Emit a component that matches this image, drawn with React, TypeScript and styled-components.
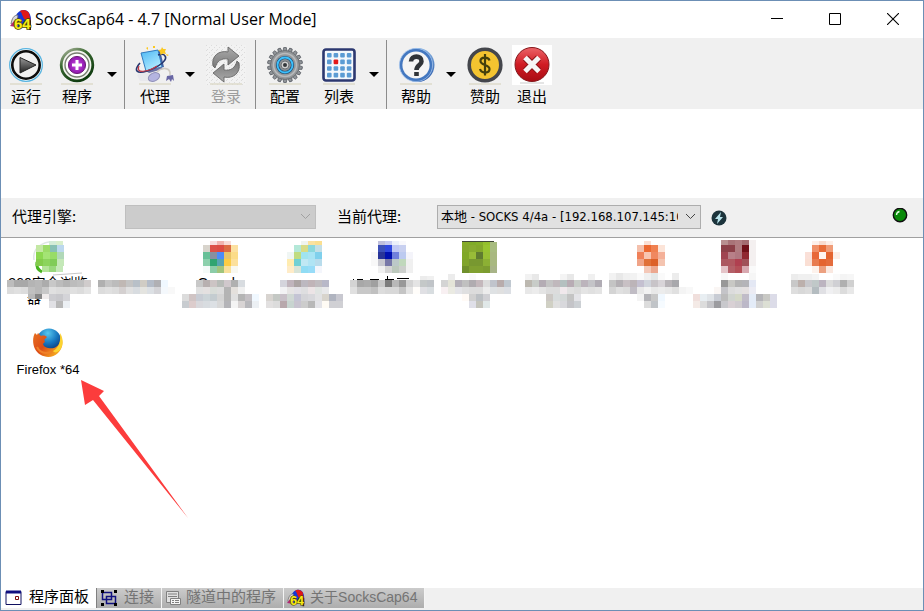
import React from "react";
import styled, { createGlobalStyle } from "styled-components";

const CJK = '"Noto Sans CJK SC", sans-serif';

const GlobalStyle = createGlobalStyle`
  * { box-sizing: border-box; }
  html, body, #root { height: 100%; }
  body {
    margin: 0;
    background: #fff;
    color: #000;
    font-family: "Liberation Sans", ${CJK};
    font-size: 15px;
  }
  button, select { font: inherit; color: inherit; }
`;

const Window = styled.div`
  display: flex;
  flex-direction: column;
  min-height: 100%;
  border: 1px solid #6c8fb5;
  background: #fff;
`;

const TitleBar = styled.header`
  display: flex;
  align-items: center;
  height: 37px;
  padding-left: 9px;
`;

const Title = styled.h1`
  flex: 1;
  margin: 0 0 2px 3px;
  font: 400 16px/20px "Open Sans", "Noto Sans", sans-serif;
  white-space: nowrap;
`;

const CaptionButton = styled.button`
  display: grid;
  place-items: center;
  width: 58px;
  height: 37px;
  padding: 0 2px 2px 0;
  border: 0;
  background: none;
`;

const Toolbar = styled.div`
  display: flex;
  height: 71px;
  padding-left: 5px;
  background: #f0f0f0;
`;

const ToolGroup = styled.div<{ $trail?: number }>`
  display: flex;
  height: 69px;
  margin-top: 2px;
  padding-right: ${(p) => p.$trail ?? 0}px;
  & + & {
    padding-left: 9px;
    border-left: 1px solid #8c8c8c;
  }
`;

const ToolButton = styled.button<{ $lead?: number }>`
  display: flex;
  flex-direction: column;
  align-items: center;
  width: 40px;
  margin-left: ${(p) => p.$lead ?? 0}px;
  padding: 5px 0 0;
  border: 0;
  background: none;
  font: 400 15px/22px ${CJK};
  white-space: nowrap;
  &:disabled { color: #9d9d9d; }
  svg { display: block; flex: none; }
`;

const MenuArrow = styled.button`
  display: grid;
  place-items: center;
  width: 24px;
  margin-left: 3px;
  padding: 0;
  border: 0;
  background: none;
`;

const Banner = styled.div`
  height: 89px;
  background: #fff;
`;

const ProxyBar = styled.div`
  display: flex;
  align-items: center;
  height: 39px;
  padding: 0 15px 2px 11px;
  background: #f0f0f0;
`;

const FieldLabel = styled.label<{ $width: number }>`
  width: ${(p) => p.$width}px;
  margin-bottom: 2px;
  font: 400 15px/20px ${CJK};
  white-space: nowrap;
`;

const SelectBox = styled.div<{ $width: number }>`
  display: grid;
  width: ${(p) => p.$width}px;
  align-items: center;
  margin-right: 21px;
  & > * { grid-area: 1 / 1; }
  & > svg { justify-self: end; margin-right: 5px; pointer-events: none; }
`;

const Select = styled.select`
  appearance: none;
  width: 100%;
  height: 24px;
  padding: 0 22px 0 3px;
  border: 1px solid #adadad;
  border-radius: 0;
  background: #e1e1e1;
  font: 400 13px/20px "DejaVu Sans Condensed", "Noto Sans", ${CJK};
  &:disabled { background: #ccc; border-color: #bfbfbf; opacity: 1; }
`;

const BoltButton = styled.button`
  display: grid;
  margin: 2px auto 0 -11px;
  padding: 0;
  border: 0;
  background: none;
`;

const ProgramList = styled.main`
  position: relative;
  flex: 1;
  display: grid;
  grid-template-columns: repeat(auto-fill, 86px);
  grid-auto-rows: 86px;
  align-content: start;
  padding-left: 4px;
  border-top: 1px solid #a0a0a0;
`;

const ProgramItem = styled.button`
  position: relative;
  display: flex;
  flex-direction: column;
  align-items: center;
  gap: 3px;
  padding: 3px 0 0;
  border: 0;
  background: none;
  text-align: center;
`;

const IconSlot = styled.span`
  display: block;
  width: 32px;
  height: 32px;
`;

const ProgramLabel = styled.span<{ $large?: boolean }>`
  font: 400 ${(p) => (p.$large ? 14 : 13)}px/15px "Liberation Sans", ${CJK};
  white-space: pre;
`;

const MosaicOverlay = styled.svg`
  position: absolute;
  left: 0;
  top: 0;
  overflow: visible;
`;

const Pointer = styled.svg`
  position: absolute;
  left: 79px;
  top: 141px;
  pointer-events: none;
`;

const TabBar = styled.nav`
  display: flex;
  height: 23px;
  padding-bottom: 2px;
  background: #f0f0f0;
  border-top: 1px solid #fff;
`;

const Tab = styled.button<{ $active?: boolean; $tight?: boolean; $small?: boolean }>`
  display: flex;
  align-items: center;
  gap: ${(p) => (p.$tight ? 5 : 7)}px;
  padding: 0 7px 2px ${(p) => (p.$tight ? 3 : 4)}px;
  border: 0;
  border-right: 1px solid ${(p) => (p.$active ? "#808080" : "#f4f4f4")};
  background: ${(p) => (p.$active ? "#fff" : "linear-gradient(#cbcbcb, #adadad)")};
  color: ${(p) => (p.$active ? "#000" : "#747474")};
  font: 400 ${(p) => (p.$small ? 14 : 15)}px/18px "Liberation Sans", ${CJK};
  white-space: nowrap;
  svg { flex: none; margin-top: 2px; }
`;

const Logo = ({ size }: { size: number }) => (
  <svg width={size} height={size} viewBox="0 0 22 22" aria-hidden="true">
    <path d="M5 10C6 4 10 1 14 1c4 0 7 4 7 10v7H8z" fill="#1438d8" />
    <path d="M10 2c3-2 7-1 9 2l2 9-7-3z" fill="#e01818" />
    <path d="M7 5l4-2 3 8H8z" fill="#1438d8" />
    <path d="M1 15c1-6 3-9 7-9l-1 9z" fill="#d8d8e4" stroke="#666" strokeWidth=".8" />
    <path d="M0 17l4-5 3 1-1 5z" fill="#b02878" />
    <path d="M19 12l2-1v10h-2z" fill="#2c2410" />
    <text x="4" y="20" fontFamily="Liberation Sans" fontWeight="700" fontSize="15" fill="#f8ec18" stroke="#4c4400" strokeWidth="1.5" paintOrder="stroke">64</text>
  </svg>
);

const Shine = () => <path d="M4 39h32" stroke="#dcd8c8" strokeWidth="1.4" />;

const RunIcon = () => (
  <svg width="40" height="40" viewBox="0 0 40 40" aria-hidden="true">
    <defs><linearGradient id="run" x2="0" y2="1"><stop stopColor="#999" /><stop offset="1" stopColor="#222" /></linearGradient></defs>
    <Shine />
    <circle cx="20" cy="20" r="16.3" fill="#fff" stroke="#58b4e0" strokeWidth="1.3" />
    <circle cx="20" cy="20" r="13.7" fill="#f1f1f1" stroke="#0c0c0c" strokeWidth="2.6" />
    <path d="M14 12.5L30 20 14 28z" fill="url(#run)" stroke="#222" />
  </svg>
);

const AddIcon = () => (
  <svg width="40" height="40" viewBox="0 0 40 40" aria-hidden="true">
    <defs>
      <radialGradient id="add"><stop stopColor="#d050e8" /><stop offset="1" stopColor="#8a14a8" /></radialGradient>
      <linearGradient id="ring" x2=".6" y2="1"><stop stopColor="#b8bca8" /><stop offset=".4" stopColor="#386830" /><stop offset="1" stopColor="#103c10" /></linearGradient>
    </defs>
    <Shine />
    <circle cx="20" cy="20" r="15.8" fill="#f4f4f0" stroke="url(#ring)" strokeWidth="2.8" />
    <circle cx="20" cy="20" r="12" fill="#fff" stroke="#777f70" strokeWidth="1.4" />
    <circle cx="20" cy="20" r="8.6" fill="url(#add)" stroke="#70207c" />
    <path d="M20 15v10M15 20h10" stroke="#fff" strokeWidth="3" />
  </svg>
);

const ProxyIcon = () => (
  <svg width="40" height="40" viewBox="0 0 40 40" aria-hidden="true">
    <defs><linearGradient id="scr" x2=".6" y2="1"><stop stopColor="#4cb8f4" /><stop offset="1" stopColor="#b4ecff" /></linearGradient></defs>
    <Shine />
    <path d="M2 30c8-8 18-3 19 6H5z" fill="#e8e8ec" />
    <path d="M8 8l17-3 4 17-17 4z" fill="#4460a0" />
    <path d="M6 8l17-3 4 17-16 4z" fill="url(#scr)" stroke="#347cc0" />
    <path d="M11 26l15-4 2 2-14 4z" fill="#6c70a4" />
    <path d="M5 18C-2 26 2 29 12 26 24 22 33 15 30 11c-1-2-4-2-7-1" fill="none" stroke="#26366e" strokeWidth="1.6" />
    <path d="M4 21c-4 8 9 6 18 0" fill="none" stroke="#c43a48" strokeWidth="1.2" />
    <ellipse cx="19" cy="32" rx="6" ry="4" transform="rotate(-25 19 32)" fill="#b4b4e0" stroke="#9090b8" />
    <path d="M22 27c5-5 14-5 13 3" fill="none" stroke="#d0ccc4" strokeWidth="1.6" />
    <path d="M32 31l6-1 1 6-2-2-1 3-2-3-3 2z" fill="#6866a4" />
    <path d="M27 2l1.3 2L31 4l-1 2.500 1 2.500-3-.5-2.500 1.500-.5-3-2-2 3-.500zM11 3l2-1v3zM18 1h2v2h-2zM31 9l3 1-2 1z" fill="#fbc820" />
  </svg>
);

const SYNC_ARROW = "M7 21C5 11 13 5 22 7V2l11 9-11 9v-6c-7-1-11 2-13 9z";

const LoginIcon = () => (
  <svg width="40" height="40" viewBox="0 0 40 40" aria-hidden="true">
    <defs>
      <pattern id="grain" width="5" height="5" patternUnits="userSpaceOnUse"><path d="M0 0h1v1H0zM3 2h1v1H3zM1 4h1v1H1z" fill="#dcdcdc" /></pattern>
      <linearGradient id="sync" x2="0" y2="1"><stop stopColor="#ababab" /><stop offset="1" stopColor="#787878" /></linearGradient>
    </defs>
    <rect width="40" height="40" fill="#f2f2f2" />
    <rect width="40" height="40" fill="url(#grain)" />
    <Shine />
    <path d={SYNC_ARROW} fill="url(#sync)" stroke="#666" strokeWidth=".9" />
    <path d={SYNC_ARROW} transform="rotate(180 20 19.500)" fill="url(#sync)" stroke="#666" strokeWidth=".9" />
  </svg>
);

const GearIcon = () => (
  <svg width="40" height="40" viewBox="0 0 40 40" aria-hidden="true">
    <Shine />
    {Array.from({ length: 18 }, (_, i) => (
      <path key={i} d="M18 6l.7-3.500h2.600L22 6z" transform={`rotate(${i * 20} 20 20)`} fill="#909498" stroke="#50545c" strokeWidth=".7" />
    ))}
    <circle cx="20" cy="20" r="14.400" fill="#94979a" stroke="#686c70" strokeWidth=".8" />
    <circle cx="20" cy="20" r="11.500" fill="none" stroke="#b8babc" strokeWidth="1.500" />
    <circle cx="20" cy="20" r="7.500" fill="#8c9094" stroke="#1c4c74" strokeWidth="3.200" />
    <circle cx="20" cy="20" r="7.500" fill="none" stroke="#3cc0fc" strokeWidth="1.800" />
    <circle cx="20" cy="20" r="4" fill="#d0d0d0" stroke="#707478" />
    <circle cx="20" cy="20" r="2" fill="#34383c" />
  </svg>
);

const ListIcon = () => (
  <svg width="40" height="40" viewBox="0 0 40 40" aria-hidden="true">
    <Shine />
    <rect x="4.500" y="4.500" width="31" height="31" rx="2.500" fill="#f4f8fc" stroke="#2c3870" strokeWidth="2.600" />
    {[0, 1, 2, 3].map((r) => [0, 1, 2, 3].map((c) => (
      <rect key={`${r}${c}`} x={8 + c * 6.6} y={8 + r * 6.6} width="4.600" height="4.600" rx="1" fill={r === 1 && c === 1 ? "#e41818" : "#5c9cd4"} />
    )))}
  </svg>
);

const HelpIcon = () => (
  <svg width="40" height="40" viewBox="0 0 40 40" aria-hidden="true">
    <defs><linearGradient id="help" x2="0" y2="1"><stop stopColor="#84b0e0" /><stop offset="1" stopColor="#2858a8" /></linearGradient></defs>
    <Shine />
    <circle cx="21.500" cy="20" r="17" fill="url(#help)" />
    <circle cx="20" cy="20" r="16.600" fill="#4478c0" stroke="#a4c4ec" strokeWidth=".8" />
    <circle cx="20" cy="20" r="13.600" fill="#f4f4f4" />
    <path d="M15 16.500c0-6.500 11-6.500 10.500 0 0 3.500-5 3.500-5 8.500M20.500 27v4" fill="none" stroke="#303438" strokeWidth="4.600" />
  </svg>
);

const DonateIcon = () => (
  <svg width="40" height="40" viewBox="0 0 40 40" aria-hidden="true">
    <Shine />
    <circle cx="20" cy="20" r="15.800" fill="#f4c430" stroke="#44464c" strokeWidth="3.600" />
    <path d="M24.500 15.500c-1-4-9-4-9 .5s9 3.500 9 8-8 5-9.500 0M20 9v21.500" fill="none" stroke="#44400c" strokeWidth="2.200" />
  </svg>
);

const ExitIcon = () => (
  <svg width="40" height="40" viewBox="0 0 40 40" aria-hidden="true">
    <defs><linearGradient id="exit" x2="0" y2="1"><stop stopColor="#ec6468" /><stop offset=".5" stopColor="#d01c24" /><stop offset="1" stopColor="#a80c14" /></linearGradient></defs>
    <rect width="40" height="40" fill="#fff" />
    <path d="M8 38h24" stroke="#ddd" strokeWidth="1.500" />
    <circle cx="20" cy="19.500" r="17" fill="url(#exit)" stroke="#84181c" />
    <path d="M13.500 13l13 13M26.500 13l-13 13" stroke="#8c1418" strokeWidth="7" />
    <path d="M13 12.500l14 14M27 12.500l-14 14" stroke="#f6f6f6" strokeWidth="5" />
  </svg>
);

const FirefoxIcon = () => (
  <svg width="32" height="32" viewBox="0 0 32 32" aria-hidden="true">
    <defs>
      <radialGradient id="globe" cx=".45" cy=".2" r=".8"><stop stopColor="#58c8f0" /><stop offset=".5" stopColor="#1878c0" /><stop offset="1" stopColor="#0c2c6c" /></radialGradient>
      <linearGradient id="fox" x2="1" y2=".7"><stop stopColor="#e87020" /><stop offset=".5" stopColor="#dc4c18" /><stop offset="1" stopColor="#f8b020" /></linearGradient>
    </defs>
    <circle cx="17" cy="13.500" r="12" fill="url(#globe)" />
    <path d="M28 7c4 8 3 14-2 19-7 7-19 4-23-4C0 16 1 9 3 6l2 2 1-2 3 3c3-1 5 0 6 1l-3 3c2 2 0 3-1 4 1 4 7 5 11 4 6-2 7-8 6-14z" fill="url(#fox)" />
    <path d="M28 6c4 6 3 13 0 17-3 3-6 3-7 1 6-3 8-10 7-18z" fill="#fcd430" />
    <path d="M5 20c3 6 8 7 14 5" fill="none" stroke="#f08028" strokeWidth="2" />
  </svg>
);

const Chevron = ({ color }: { color: string }) => (
  <svg width="11" height="7" viewBox="0 0 11 7" aria-hidden="true"><path d="M1 1l4.500 4.500L10 1" fill="none" stroke={color} /></svg>
);

const DropMark = () => (
  <svg width="10" height="5" viewBox="0 0 10 5" aria-hidden="true"><path d="M0 0h10L5 5z" /></svg>
);

type Band = [x: number, y: number, height: number, colors: string];

const CELL = 7;

const Mosaic = ({ bands, children }: { bands: Band[]; children?: React.ReactNode }) => (
  <MosaicOverlay width="86" height="72" shapeRendering="crispEdges" aria-hidden="true">
    {children}
    {bands.flatMap(([x, y, h, colors]) =>
      colors.split(" ").map((c, i) =>
        c === "-" ? null : <rect key={`${x}-${y}-${i}`} x={x + i * CELL} y={y} width={CELL} height={h} fill={`#${c}`} />,
      ),
    )}
  </MosaicOverlay>
);

interface Program {
  name: string;
  label?: string;
  bands: Band[];
  extra?: React.ReactNode;
}

const programs: Program[] = [
  {
    name: "1",
    label: "360安全浏览\n器\u3000\u3000",
    extra: (
      <g shapeRendering="auto" fill="none">
        <path d="M29 22C27 10 38 2 52 4" stroke="#dfe6e4" strokeWidth="1.500" />
        <path d="M32 24c-1 5 1 8 5 10" stroke="#48b420" strokeWidth="3" />
        <path d="M48 37l29-2" stroke="#c8c8c8" />
      </g>
    ),
    bands: [
      [44, 3, 4, "d4ecd8 d8eecc"],
      [31, 7, 7, "c4e8a4 9cdc68 88c0b4 bcd8ee"],
      [31, 14, 7, "8cd850 a4e474 98dc68 b0d8b8"],
      [31, 21, 7, "84cc4c 8cd45c 80cc58 c4e8b8"],
      [37, 28, 6, "b4e498 98d87c c4e8b8"],
      [2, 42, 7, "bcbcbc a8a8a8 a8a8a8 b4b4b4 b8b8b8 acacac c8c8c8 bcbcbc b4b4b4 bcbcbc c0c0c0 d0cccc"],
      [2, 49, 7, "dcdcdc e0e0e0 dcdcdc c0c0c0 b8b8b8 c8c8c8 e0e0e0 dcdcdc dcdcdc e0e0e0 dcdcdc e4e4e4"],
      [23, 56, 5, "b8b8b8 888888 f0ecec"],
      [44, 56, 7, "ccccd0 c8c8cc d4d4d8"],
      [44, 63, 7, "e0e0e4 b8b8b8 ecf0f4"],
    ],
  },
  {
    name: "2",
    bands: [
      [7, 42, 7, "b0b0b0 c4c4c4 bcbcbc c0b8b4 c4c4c4 b8c0c8 d0ccc4 b4bcc8 b0b0b4 f0f8ff"],
      [7, 49, 7, "dcdcdc e0e0e0 dcdcdc d4d0d0 e0e0e0 d8dce0 e4e4e0 dce0e4 d4d4d8 f4f8fc f8f8f8"],
    ],
  },
  {
    name: "3",
    label: "Google",
    bands: [
      [33, 3, 4, "f8dcdc f0b4b0 f8dcd8"],
      [26, 7, 7, "d8d4cc dc5048 dc4c44 dc6c44 fce0a0"],
      [26, 14, 7, "68c098 8890a0 4c8cf8 e8c468 fcdc88"],
      [26, 21, 7, "8cd0ac 30a470 58a4b0 fccc44 fce09c"],
      [26, 28, 7, "f4faf8 8ccca8 a0c47c f8e09c f8f8f0"],
      [19, 42, 7, "c8c8c8 b8b0b0 ccc4c4 b8bcb8 d0c8cc b0b0b0 d8dce0"],
      [19, 49, 7, "e0e0e0 e4e0e0 d8dcd8 dcdcdc b4b4b4 e4e0dc f0f0f0"],
      [5, 56, 7, "dcdcdc d0c4c4 c8ccd4 ccd4d8 c4ccd0 d4d4d4 b4b4b4 e0e0e0 b4b4b4 c4c0c4 f0f8ff"],
      [5, 63, 7, "c8ccd0 dccccc d8d8dc d8dce0 dce0e4 d8d8d8 b4b4b8 f4f4f4 d8d4d4 b8b8bc ecf0f4"],
    ],
  },
  {
    name: "4",
    bands: [
      [38, 3, 4, "f0f4f0 fbe2a0 fbdf90"],
      [31, 7, 7, "b4e8d8 d8dc88 8cd8dc c4dfe6"],
      [24, 14, 7, "f0f6f4 c0dc80 a0e4f0 a8e4f4 80d0ec"],
      [24, 21, 7, "ffecb0 70d0d4 c0e8f4 b0e4f4 b8dcec"],
      [24, 28, 7, "ffecc8 d8e4d8 90dcf4 98dcf8 f4f6fc"],
      [17, 42, 7, "d4d4dc c0b4bc aca4a4 bcb8c0 c0b4b8 c0bcc0 b8b8c8"],
      [17, 49, 7, "f2f2f4 e6e4e4 e2e0e6 dedee0 ece4e6 e0e4e2 e8e8ea"],
      [3, 56, 7, "d8d4d0 c4c8c4 c8c0c8 d0d8d4 c4c4d4 d4d4d8 d8d8dc e2e2e4 d8d4cc b0b4c0 c8c8d0"],
      [3, 63, 7, "e2e0e0 dcdcdc b8a8ac c8d4d0 c8c4d0 cccccc b8b8b8 e4e4e8 fffbf4 d0d0d4 d0d0d4"],
    ],
  },
  {
    name: "5",
    extra: <path d="M4 41h1M8 41h6M21 41h9M36 41h9M38 38v4M48 40h12" stroke="#000" />,
    bands: [
      [29, 3, 4, "c0c0dc c8ccf0 ecf0fa f8f8fc"],
      [29, 7, 7, "3c50b8 3048e0 c0c8f4 c8d0f0"],
      [22, 14, 7, "f8f8f8 283498 0010b0 7080dc bccaf0 f4f4fa"],
      [22, 21, 7, "f8f8f8 c8c8d0 7878a8 bcc8c8 c0d8bc f0f0f0"],
      [29, 28, 7, "f0f0f0 d4d4d4 bcc8bc cccfcc f0f0f0"],
      [71, 38, 4, "ececec f0f0f0"],
      [1, 42, 7, "d4d4d4 a8a8a8 acacac a0a0a0 c8c8c8 7c7c7c b8b8b8 989898 d4d4d4 e4e4e4 c4c8c8 c0c4c8"],
      [1, 49, 7, "e0e0e0 c8c8c8 c8c8c8 c0c0c0 dcdcdc d8d8d8 d8d8d8 c4c4c4 e4e4e4 fffdfa e0e0e4 d8dde0"],
    ],
  },
  {
    name: "6",
    bands: [
      [27, 4, 3, "86ac28 80ac28 84b028 94c02c a8bc80"],
      [27, 7, 7, "84a82c 88ac30 84a82c 98c430 a8bc80"],
      [27, 14, 7, "80a828 98bc38 607c30 98c034 a8b880"],
      [27, 21, 7, "80a42c 789830 789830 8cb034 a8b880"],
      [27, 28, 7, "70902c 80a030 80a030 7c9c30 a8b488"],
      [13, 36, 6, "ececec - - fafafa"],
      [6, 42, 7, "d4d4d4 e4e4d8 b4b0b8 c0c0c0 b0acb0 c4b8bc dcdcdc c0c4cc b8acac c0c8d0"],
      [6, 49, 7, "f8f0f2 eaeae2 e4e4e8 dfdfe0 dcdcdc dcdcdc ececec dfe2e4 e0e0e0 dcdfe4"],
      [27, 56, 7, "fffaf6 d0d0d0 bcc0c4 d0d0d4"],
      [34, 63, 7, "dfdfe8 c4c4bc e0e8e8"],
    ],
    extra: <path d="M27 3h32v1H27z" fill="#404838" />,
  },
  {
    name: "7",
    bands: [
      [4, 36, 6, "f2f2f2 e8e8e8 - - - f4f4f4 e8e8e8 - - f0f0f0"],
      [4, 42, 7, "bcb8b0 c8ccc8 b4acb4 c4c4c4 c0b8bc b4c0c0 b8acb4 c8ccc8 bcb4bc c4c4c8 b0acb4"],
      [4, 49, 7, "e8e8e8 ececec e4e4e4 dcdcdc dcdcdc f0e8ec e0e0e0 dcdcdc e4e4e4 e0e0e0 e4e4e4"],
      [25, 56, 7, "ccc8c4 d8dcdc d4d8d8 c4c4c4 e4e4e8"],
      [25, 63, 7, "d0d0c4 e0e0e0 d8d8dc c4c4c8 ccd0d4"],
    ],
  },
  {
    name: "8",
    bands: [
      [37, 3, 4, "fadfd4"],
      [30, 7, 7, "f4c0ac ec6830 f08050 fce4d8"],
      [30, 14, 7, "f08058 f8c4b0 f08860 f4b098"],
      [30, 21, 7, "f0a488 e07038 dc6028 f4c4b0"],
      [37, 28, 7, "f4c8b8 eca890"],
      [2, 35, 7, "f2f2f2 e8e8e8 f0f0f0 f2f2f2 fafafa f0f0f0 e4e8e8 fafafa - ececec"],
      [2, 42, 7, "c4c4c4 b4b0b4 c8c0c4 bcb4b8 c4c0d0 d0d4dc c8c4c8 d8d4d8 b8b4b8 a8a8ac"],
      [2, 49, 7, "d4d4d4 e0e0e0 dcdcdc c0bcc4 e8e8e8 f2f2f2 e8e8e8 ececec e8e8e8 e0e0e0 f4f4f4 f8f8f8"],
      [30, 56, 7, "f4f4f4 b4b4b8 c8c8c8 f0f8ff"],
      [37, 63, 7, "dcdcdc c0c4c8 f6fbff"],
    ],
  },
  {
    name: "9",
    bands: [
      [28, 2, 5, "b89090 a87478 b07c80 a46c70 f4f0f0"],
      [28, 7, 7, "8c4048 8c4048 b07c80 701018 f4f0f0"],
      [28, 14, 7, "a04450 b88088 b07880 902830 f4f0f0"],
      [28, 21, 7, "ac5860 b05860 b04050 a05058 f4f0f0"],
      [28, 28, 7, "e4c4c8 b46068 b45058 d8a8b0 fafafa"],
      [28, 35, 7, "f8f8f8 - - - f6f6f6"],
      [28, 42, 7, "989898 c8c8c4 b4b4b4 b4b4b8 e4e8f4"],
      [21, 49, 7, "faf6f4 c4c4c8 dcdcdc e0e0e0 e4e0e0 ececf4"],
      [0, 56, 7, "f0dfdc e8eef2 e0e4e8 c8ccd4 bcbcbc d0d4d0 d4d8c8 c0bcc8 e4ecf8 b4b4b8 c8c8c4 dcdce8"],
      [0, 63, 7, "f4eae6 dcdcdc c4c4c8 9c9ca0 c8c8cc d8d0d4 d0ccd0 bcb8c8 e4ecf8 d0d0d0 dcdfd4 dcdce8"],
    ],
  },
  {
    name: "10",
    bands: [
      [33, 3, 4, "fdf0ea f8dcd0 fdefe8"],
      [33, 7, 7, "f09068 e86c38 f09c78"],
      [26, 14, 7, "fae0d8 e86838 fff4f0 e46430 fceee8"],
      [26, 21, 7, "fadfd4 e87c50 e46430 e46c3c"],
      [33, 28, 7, "fdf2ec eca080 fae8e0"],
      [12, 36, 6, "ececec f0f0f0 f0f0f0 f4f4f4 - - fafafa f4f4f4 f6f6f6"],
      [12, 42, 7, "c8c8c8 bcb0ac c8c8cc c0c8c8 bcb4c0 dcdcdc d0d0d4 b0b0b0 d0d0d0"],
      [12, 49, 7, "dedede d8d8d8 dcdcdc b4bcc0 e0e0e4 f0f0f2 ececec dcdcdc e8e8e8"],
    ],
  },
];

export default function App() {
  return (
    <>
      <GlobalStyle />
      <Window>
        <TitleBar>
          <Logo size={22} />
          <Title>SocksCap64 - 4.7 [Normal User Mode]</Title>
          <CaptionButton aria-label="Minimize">
            <svg width="12" height="12" viewBox="0 0 12 12"><path d="M0 5.500h12" stroke="#000" /></svg>
          </CaptionButton>
          <CaptionButton aria-label="Maximize">
            <svg width="12" height="12" viewBox="0 0 12 12"><path d="M.5.5h11v11H.5z" fill="none" stroke="#000" /></svg>
          </CaptionButton>
          <CaptionButton aria-label="Close">
            <svg width="12" height="12" viewBox="0 0 12 12"><path d="M0 0l12 12M12 0L0 12" stroke="#000" strokeWidth="1.100" /></svg>
          </CaptionButton>
        </TitleBar>

        <Toolbar role="toolbar">
          <ToolGroup>
            <ToolButton><RunIcon />运行</ToolButton>
            <ToolButton $lead={11}><AddIcon />程序</ToolButton>
            <MenuArrow aria-label="Program menu"><DropMark /></MenuArrow>
          </ToolGroup>
          <ToolGroup $trail={9}>
            <ToolButton $lead={1}><ProxyIcon />代理</ToolButton>
            <MenuArrow aria-label="Proxy menu"><DropMark /></MenuArrow>
            <ToolButton $lead={4} disabled><LoginIcon />登录</ToolButton>
          </ToolGroup>
          <ToolGroup>
            <ToolButton><GearIcon />配置</ToolButton>
            <ToolButton $lead={14}><ListIcon />列表</ToolButton>
            <MenuArrow aria-label="List menu"><DropMark /></MenuArrow>
          </ToolGroup>
          <ToolGroup>
            <ToolButton><HelpIcon />帮助</ToolButton>
            <MenuArrow aria-label="Help menu"><DropMark /></MenuArrow>
            <ToolButton $lead={2}><DonateIcon />赞助</ToolButton>
            <ToolButton $lead={7}><ExitIcon />退出</ToolButton>
          </ToolGroup>
        </Toolbar>

        <Banner />

        <ProxyBar>
          <FieldLabel htmlFor="engine" $width={113}>代理引擎:</FieldLabel>
          <SelectBox $width={191}>
            <Select id="engine" disabled><option></option></Select>
            <Chevron color="#a0a0a0" />
          </SelectBox>
          <FieldLabel htmlFor="proxy" $width={100}>当前代理:</FieldLabel>
          <SelectBox $width={264}>
            <Select id="proxy"><option>本地 - SOCKS 4/4a - [192.168.107.145:1080]</option></Select>
            <Chevron color="#444" />
          </SelectBox>
          <BoltButton aria-label="Test proxy">
            <svg width="16" height="16" viewBox="0 0 16 16">
              <circle cx="8" cy="8" r="7.500" fill="#1c343c" />
              <path d="M10 2L4 9h3l-1 5 6-7H9z" fill="#b8e4ec" />
            </svg>
          </BoltButton>
          <svg width="16" height="18" viewBox="0 0 16 18" role="img" aria-label="Online">
            <circle cx="8" cy="7" r="6.700" fill="#0a8a0a" stroke="#101010" strokeWidth="1.400" />
            <path d="M4.500 7c0-2 1-3 3-3.500" fill="none" stroke="#e4ffe4" strokeWidth="1.300" />
          </svg>
        </ProxyBar>

        <ProgramList>
          {programs.map((p) => (
            <ProgramItem key={p.name} aria-label={`Program ${p.name}`}>
              <IconSlot />
              {p.label && <ProgramLabel $large>{p.label}</ProgramLabel>}
              <Mosaic bands={p.bands}>{p.extra}</Mosaic>
            </ProgramItem>
          ))}
          <ProgramItem>
            <FirefoxIcon />
            <ProgramLabel>Firefox *64</ProgramLabel>
          </ProgramItem>
          <Pointer width="112" height="142" viewBox="0 0 112 142" aria-hidden="true">
            <path d="M1 1l23 11-5 5 89 122L13 21l-8 5z" fill="#fc3c3c" />
          </Pointer>
        </ProgramList>

        <TabBar>
          <Tab $active>
            <svg width="17" height="16" viewBox="0 0 17 16" aria-hidden="true">
              <path d="M1 1.500h15v13H1z" fill="#fff" stroke="#101060" />
              <path d="M1 2h15" stroke="#101080" strokeWidth="3" />
              <path d="M10.500 6.500h3v3h-3z" fill="#fff" stroke="#801010" />
            </svg>
            程序面板
          </Tab>
          <Tab>
            <svg width="16" height="16" viewBox="0 0 16 16" aria-hidden="true">
              <path d="M1.500 2.500h9v7h-9zM5.500 6.500h9v7h-9z" fill="none" stroke="#101080" strokeWidth="1.500" />
              <path d="M0 0h3v3H0zM13 0h3v3h-3zM0 13h3v3H0zM13 13h3v3h-3z" />
            </svg>
            连接
          </Tab>
          <Tab $tight>
            <svg width="16" height="16" viewBox="0 0 16 16" aria-hidden="true">
              <path d="M1.500 1.500h12v11h-12z" fill="#e0e0e0" stroke="#808080" />
              <path d="M3 4h9M3 6.500h9" stroke="#808080" />
              <path d="M5.500 8.500h10v6h-10z" fill="#f4f4f4" stroke="#808080" />
              <path d="M7 10.500h2M10 10.500h4M7 12.500h2M10 12.500h4" stroke="#808080" />
            </svg>
            隧道中的程序
          </Tab>
          <Tab $tight $small>
            <Logo size={18} />
            关于SocksCap64
          </Tab>
        </TabBar>
      </Window>
    </>
  );
}
